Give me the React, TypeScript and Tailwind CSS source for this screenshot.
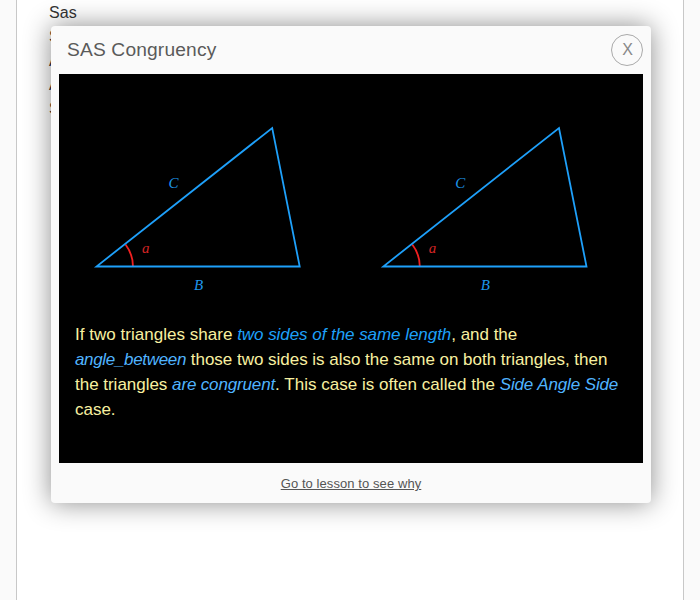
const lessons = ['Sas', 'Sss', 'Asa', 'Aas', 'Ssa'];

function Triangle({ x }: { x: number }) {
  return (
    <g transform={`translate(${x} 0)`} fontFamily="Liberation Serif, serif" fontStyle="italic" fontSize="15">
      <path d="M66.5 170.5A36.5 36.5 0 0 1 74 193" fill="none" stroke="#f02020" strokeWidth="1.8" />
      <path d="M37.5 192.5H240.7L213.2 54Z" fill="none" stroke="#1ea0fa" strokeWidth="1.8" />
      <text x="109.5" y="114" fill="#1e96eb">C</text>
      <text x="135" y="216" fill="#1e96eb">B</text>
      <text x="83" y="179" fill="#d22424">a</text>
    </g>
  );
}

export default function App() {
  return (
    <div className="relative h-[600px] w-[700px] overflow-hidden bg-[#fafafa] font-['Liberation_Sans',sans-serif]">
      <main className="mx-4 h-full border-x border-[#c8c8c8] bg-white pt-px pl-8 text-base leading-6 tracking-[0.15px] text-[#333]">
        <ul>
          {lessons.map((name) => (
            <li key={name}>{name}</li>
          ))}
        </ul>
      </main>
      <section className="absolute top-[26px] left-[51px] flex h-[477px] w-[600px] flex-col rounded bg-[#fafafa] px-2 shadow-[0_0_27px_rgba(0,0,0,0.46)]">
        <header className="flex h-12 items-center justify-between pl-2">
          <h1 className="text-[19.2px] leading-6 tracking-[0.16px] text-[#5a5a5a]">SAS Congruency</h1>
          <button className="flex size-8 items-center justify-center rounded-full border border-[#aaa] pl-px text-base text-[#888]">X</button>
        </header>
        <div className="h-[389px] bg-black">
          <svg className="block" width="584" height="248">
            <Triangle x={0} />
            <Triangle x={286.8} />
          </svg>
          <p className="w-[568px] pl-4 text-[17px] leading-[25px] tracking-[-0.02px] text-[#f8f0a0]">
            <span className="tracking-[0.025px]">If two triangles share </span>
            <em className="tracking-[-0.05px] text-[#1ea0fa]">two sides of the same length</em>, and the{' '}
            <em className="tracking-[-0.33px] text-[#50b4ff]">angle_between</em> those two sides is also the same on both triangles, then the triangles{' '}
            <em className="tracking-[-0.15px] text-[#50b4ff]">are congruent</em>
            <span className="tracking-[0.03px]">. This case is often called the </span>
            <em className="tracking-[-0.12px] text-[#50b4ff]">Side Angle Side</em> case.
          </p>
        </div>
        <footer className="flex h-10 items-center justify-center pt-0.5">
          <a className="text-[13px] tracking-[0.08px] text-[#555] underline">Go to lesson to see why</a>
        </footer>
      </section>
    </div>
  );
}
